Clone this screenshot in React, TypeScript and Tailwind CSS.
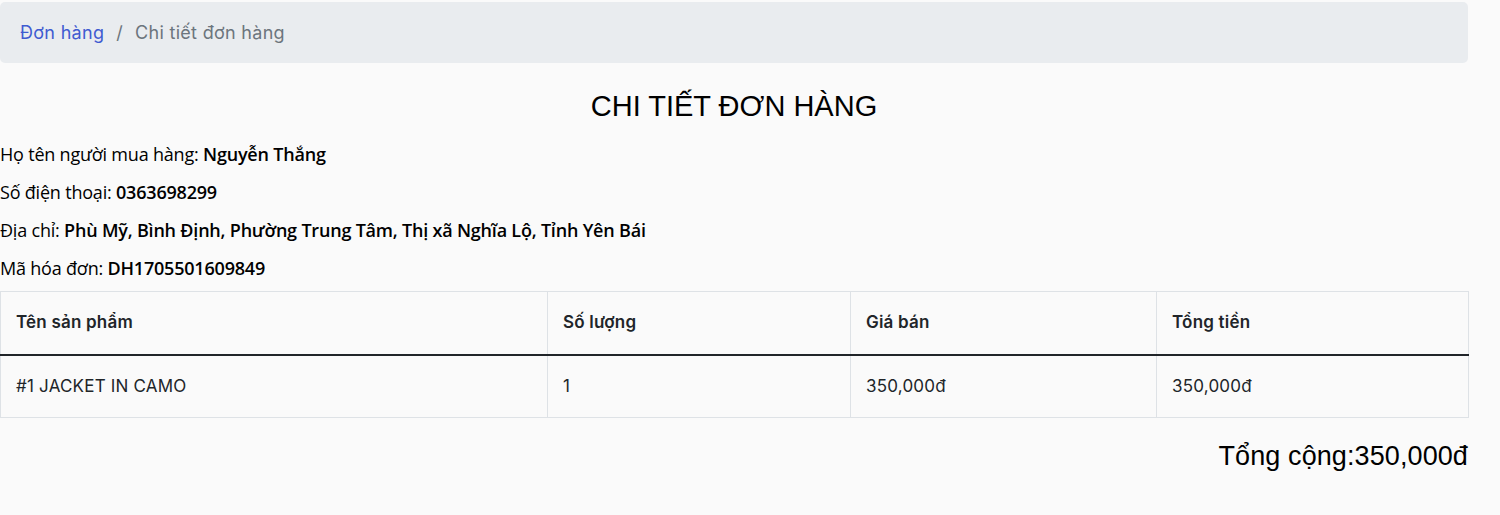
import React from 'react';

const rows = [{ name: '#1 JACKET IN CAMO', qty: 1, price: '350,000đ', total: '350,000đ' }];

export default function App() {
  return (
    <div className="min-h-[515px] w-[1500px] bg-[#fafafa] pt-[2px]">
      <div className="w-[1468px]">
        {/* Breadcrumb */}
        <nav className="flex h-[61px] items-center rounded-[5px] bg-[#e9ecef] px-5 font-['Inter',sans-serif] text-[18px] tracking-[0.3px]">
          <span className="text-[#3f5bd1]">Đơn hàng</span>
          <span className="px-[12px] text-[#6c757d]">/</span>
          <span className="text-[#6c757d]">Chi tiết đơn hàng</span>
        </nav>

        <h1 className="mt-[25px] text-center font-['Liberation_Sans',Arial,sans-serif] text-[29px] leading-[36px] text-black">
          CHI TIẾT ĐƠN HÀNG
        </h1>

        {/* Customer info */}
        <div className="mt-[11px] font-['Open_Sans',sans-serif] text-[18px] leading-[38px] tracking-[-0.2px] text-black">
          <p>Họ tên người mua hàng: <b className="font-semibold">Nguyễn Thắng</b></p>
          <p>Số điện thoại: <b className="font-semibold">0363698299</b></p>
          <p>Địa chỉ: <b className="font-semibold">Phù Mỹ, Bình Định, Phường Trung Tâm, Thị xã Nghĩa Lộ, Tỉnh Yên Bái</b></p>
          <p>Mã hóa đơn: <b className="font-semibold">DH1705501609849</b></p>
        </div>

        {/* Items table */}
        <table className="mt-[4px] w-[1468px] table-fixed border-collapse font-['Inter',sans-serif] text-[17px] tracking-[0.2px] text-[#212529]">
          <colgroup>
            <col className="w-[547px]" />
            <col className="w-[303px]" />
            <col className="w-[306px]" />
            <col className="w-[312px]" />
          </colgroup>
          <thead>
            <tr className="h-[63px]">
              <th className="border border-b-2 border-[#dee2e6] border-b-[#212529] px-[15px] text-left font-semibold">Tên sản phẩm</th>
              <th className="border border-b-2 border-[#dee2e6] border-b-[#212529] px-[15px] text-left font-semibold">Số lượng</th>
              <th className="border border-b-2 border-[#dee2e6] border-b-[#212529] px-[15px] text-left font-semibold">Giá bán</th>
              <th className="border border-b-2 border-[#dee2e6] border-b-[#212529] px-[15px] text-left font-semibold">Tổng tiền</th>
            </tr>
          </thead>
          <tbody>
            {rows.map((r) => (
              <tr key={r.name} className="h-[63px]">
                <td className="border border-[#dee2e6] px-[15px]">{r.name}</td>
                <td className="border border-[#dee2e6] px-[15px]">{r.qty}</td>
                <td className="border border-[#dee2e6] px-[15px]">{r.price}</td>
                <td className="border border-[#dee2e6] px-[15px]">{r.total}</td>
              </tr>
            ))}
          </tbody>
        </table>

        <div className="mt-[22px] text-right font-['Liberation_Sans',Arial,sans-serif] text-[27px] leading-[32px] tracking-[0.1px] text-black">
          Tổng cộng:350,000đ
        </div>
      </div>
    </div>
  );
}
